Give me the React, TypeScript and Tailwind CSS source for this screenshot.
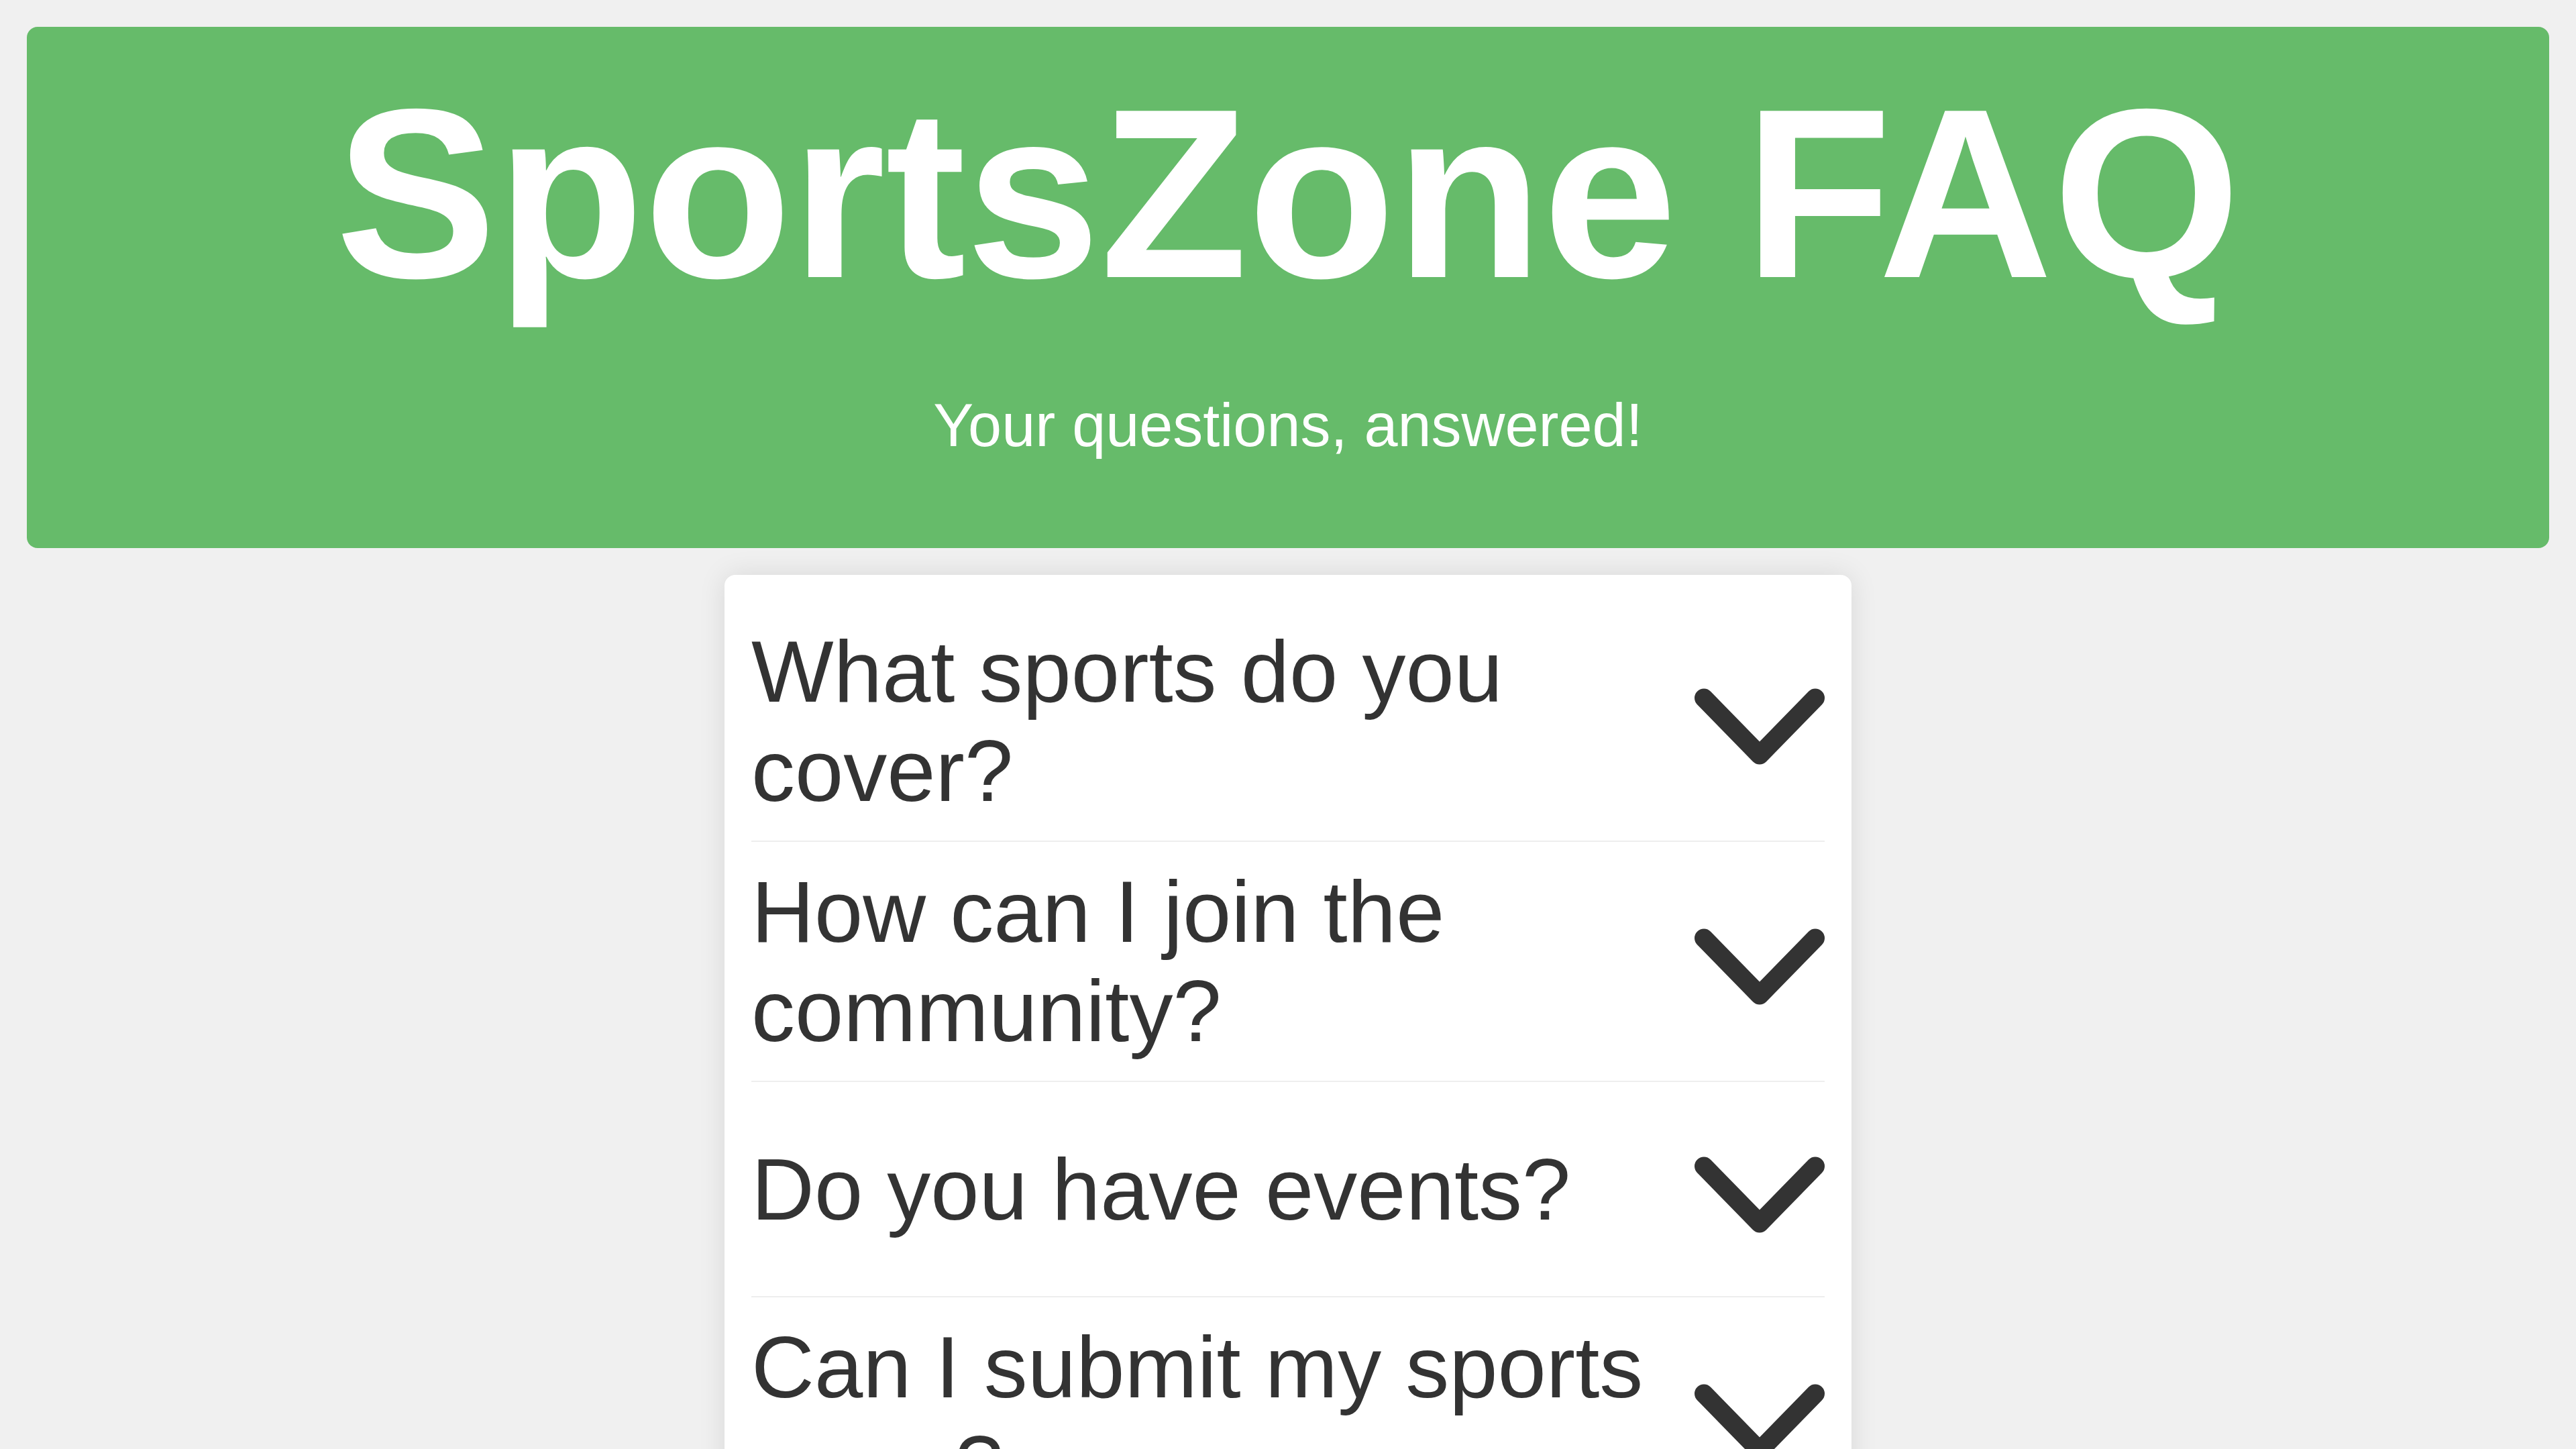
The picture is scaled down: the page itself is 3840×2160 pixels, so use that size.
import { useState } from 'react';

const faqs = [
  {
    q: 'What sports do you cover?',
    a: 'We cover football, basketball, tennis, cricket, athletics and many more.',
  },
  {
    q: 'How can I join the community?',
    a: 'Sign up for a free account and jump straight into the forums.',
  },
  {
    q: 'Do you have events?',
    a: 'Yes! We host local meetups and online watch parties every month.',
  },
  {
    q: 'Can I submit my sports news?',
    a: 'Absolutely. Use the submission form on your profile page.',
  },
  {
    q: 'Is SportsZone free to use?',
    a: 'Yes, all core features are free for everyone.',
  },
];

function Chevron() {
  return (
    <svg
      width="194"
      height="130"
      viewBox="0 0 194 130"
      fill="none"
      className="shrink-0"
    >
      <path
        d="M14 30.5 L97 115.5 L180 30.5"
        stroke="#333333"
        strokeWidth="28"
        strokeLinecap="round"
        strokeLinejoin="round"
      />
    </svg>
  );
}

function FaqItem({ q, a }: { q: string; a: string }) {
  const [open, setOpen] = useState(false);

  return (
    <div className="border-b-2 border-[#eeeeee]">
      <button
        onClick={() => setOpen(!open)}
        className="w-full min-h-[319px] py-[30px] flex items-center gap-[48px] text-left cursor-pointer"
      >
        <span className="flex-1 text-[130px] leading-[148px] text-[#333333]">{q}</span>
        <Chevron />
      </button>
      {open && <p className="pb-[30px] text-[80px] text-[#555555]">{a}</p>}
    </div>
  );
}

export default function App() {
  return (
    <div className="min-h-screen bg-[#f0f0f0] p-[40px] font-[Arial,Helvetica,sans-serif]">
      {/* Header */}
      <header className="bg-[#66bb6a] rounded-[16px] pt-[41px] pb-[131px] text-center text-white">
        <h1 className="text-[360px] font-bold leading-[normal]">SportsZone FAQ</h1>
        <p className="mt-[88px] text-[90px] leading-[normal]">Your questions, answered!</p>
      </header>

      {/* FAQ list */}
      <main className="mx-auto mt-[40px] w-[1680px] bg-white rounded-[16px] shadow-[0_0_40px_rgba(0,0,0,0.1)] px-[40px] pt-[40px] pb-[40px]">
        {faqs.map((f) => (
          <FaqItem key={f.q} q={f.q} a={f.a} />
        ))}
      </main>
    </div>
  );
}
